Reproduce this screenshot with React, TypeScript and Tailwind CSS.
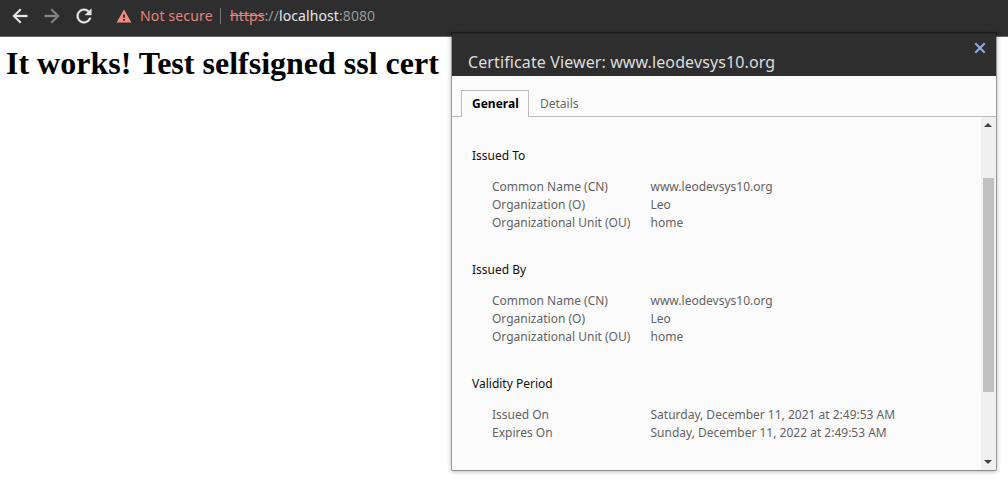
type Field = { label: string; value: string };
type Section = { title: string; fields: Field[] };

const identity: Field[] = [
  { label: "Common Name (CN)", value: "www.leodevsys10.org" },
  { label: "Organization (O)", value: "Leo" },
  { label: "Organizational Unit (OU)", value: "home" },
];

const sections: Section[] = [
  { title: "Issued To", fields: identity },
  { title: "Issued By", fields: identity },
  {
    title: "Validity Period",
    fields: [
      { label: "Issued On", value: "Saturday, December 11, 2021 at 2:49:53 AM" },
      { label: "Expires On", value: "Sunday, December 11, 2022 at 2:49:53 AM" },
    ],
  },
];

const BACK = "M20 11H7.83l5.59-5.59L12 4l-8 8 8 8 1.41-1.41L7.83 13H20v-2z";
const FORWARD = "M12 4l-1.41 1.41L16.17 11H4v2h12.17l-5.58 5.59L12 20l8-8z";
const RELOAD =
  "M17.65 6.35C16.2 4.9 14.21 4 12 4c-4.42 0-7.99 3.58-7.99 8s3.57 8 7.99 8c3.73 0 6.84-2.55 7.73-6h-2.08c-.82 2.33-3.04 4-5.65 4-3.31 0-6-2.69-6-6s2.69-6 6-6c1.66 0 3.14.69 4.22 1.78L13 11h7V4l-2.35 2.35z";

function NavIcon({ d, className }: { d: string; className: string }) {
  return (
    <svg viewBox="0 0 24 24" className={`size-[22px] shrink-0 ${className}`} fill="currentColor" stroke="currentColor" strokeWidth="0.4">
      <path d={d} />
    </svg>
  );
}

function Toolbar() {
  return (
    <header className="flex h-[37px] items-center border-b border-[#6a6a6a] bg-[#2e2e2e] pb-[4px] pl-[9px] text-[14px] leading-5">
      <NavIcon d={BACK} className="text-[#e8e8e8]" />
      <NavIcon d={FORWARD} className="ml-[10px] text-[#868686]" />
      <NavIcon d={RELOAD} className="ml-[10px] text-[#e8e8e8]" />
      <svg viewBox="0 0 16 14" className="ml-[21px] h-[14px] w-4 shrink-0">
        <path d="M8 .6 15.4 13.4H.6z" fill="#f28b82" />
        <path d="M7.1 5.4h1.8v3.4H7.1zM7.1 10h1.8v1.8H7.1z" fill="#2e2e2e" />
      </svg>
      <span className="ml-[8px] w-[74px] pb-px tracking-[0.16px] whitespace-nowrap text-[#e5847c]">Not secure</span>
      <span className="ml-[6px] h-4 w-px bg-[#77797b]" />
      <span className="ml-[9px] pb-px tracking-[0.09px] whitespace-nowrap text-[#96989b]">
        <span className="text-[#e5847c] line-through">https</span>://
        <span className="text-[#e6e7e9]">localhost</span>:8080
      </span>
    </header>
  );
}

function Scrollbar() {
  return (
    <div className="flex w-[15px] flex-col items-center bg-[#f0f0f0] pt-[6px] pb-[6px]">
      <svg viewBox="0 0 8 4" className="mr-px h-1 w-2">
        <path d="M0 4 4 0l4 4z" fill="#444" />
      </svg>
      <div className="mt-[51px] h-[214px] w-[11px] bg-[#c1c1c1]" />
      <svg viewBox="0 0 8 4" className="mt-auto mr-px h-1 w-2">
        <path d="M0 0h8L4 4z" fill="#444" />
      </svg>
    </div>
  );
}

function CertificateDialog() {
  return (
    <section className="absolute top-[33px] left-[452px] flex h-[437px] w-[544px] flex-col bg-[#fbfbfb] shadow-[0_0_0_1px_rgba(0,0,0,0.28),0_1px_5px_rgba(0,0,0,0.4)]">
      <div className="flex h-[43px] shrink-0 justify-between border-t border-[#272727] bg-[#2e2e2e] pr-[10px] pl-4">
        <h2 className="pt-[17px] text-[16px] leading-[22px] tracking-[0.11px] text-[#dddddd]">
          Certificate Viewer: www.leodevsys10.org
        </h2>
        <svg viewBox="0 0 12 12" className="mt-2 size-[12px]" stroke="#8caee6" strokeWidth="2" fill="none">
          <path d="M1.3 1.3 10.7 10.7M10.7 1.3 1.3 10.7" />
        </svg>
      </div>
      <div className="flex h-[41px] shrink-0 items-end text-[12px] leading-4">
        <div className="h-px w-[9px] bg-[#bdbdbd]" />
        <div className="h-[27px] w-[68px] border border-b-0 border-[#bdbdbd] pt-[5px] pl-[10px] font-bold text-black">
          General
        </div>
        <div className="h-[27px] flex-1 border-b border-[#bdbdbd] pt-[6px] pl-[11px] text-[#696969]">
          Details
        </div>
      </div>
      <div className="flex min-h-0 flex-1">
        <div className="flex flex-1 flex-col gap-[29px] pt-[30px] pl-5 text-[12px] leading-[18px]">
          {sections.map((section) => (
            <div key={section.title}>
              <h3 className="mb-[13px] text-[#101010]">{section.title}</h3>
              <dl className="grid grid-cols-[158.5px_1fr] pl-5 text-[#636363]">
                {section.fields.map((field) => (
                  <div key={field.label} className="contents">
                    <dt className="whitespace-nowrap">{field.label}</dt>
                    <dd className="whitespace-nowrap">{field.value}</dd>
                  </div>
                ))}
              </dl>
            </div>
          ))}
        </div>
        <Scrollbar />
      </div>
    </section>
  );
}

export default function App() {
  return (
    <div className="relative h-[479px] w-[1008px] overflow-hidden bg-white font-['Noto_Sans',sans-serif]">
      <Toolbar />
      <main className="pt-[8px] pl-[6px]">
        <h1 className="font-['Liberation_Serif',serif] text-[32px] leading-9 font-bold text-black">
          It works! Test selfsigned ssl cert
        </h1>
      </main>
      <CertificateDialog />
    </div>
  );
}
